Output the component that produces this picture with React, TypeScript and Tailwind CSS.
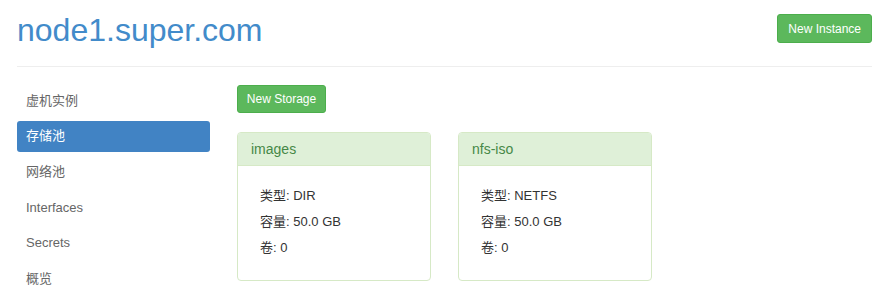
import React from "react";

const navItems = ["虚机实例", "存储池", "网络池", "Interfaces", "Secrets", "概览"];

const pools = [
  { name: "images", type: "DIR", size: "50.0 GB", volumes: 0 },
  { name: "nfs-iso", type: "NETFS", size: "50.0 GB", volumes: 0 },
];

const font = "font-['Liberation_Sans','Noto_Sans_CJK_SC',sans-serif]";

const App = () => {
  return (
    <div className={`${font} bg-white min-h-[308px] pl-[17px] pr-[24px] text-[#333]`}>
      <div className="flex justify-between items-start border-b border-[#eeeeee] h-[67px]">
        <h1 className="pt-[13px] text-[32px] leading-[35px] text-[#428bca]">node1.super.com</h1>
        <button className="mt-[14px] h-[29px] px-[10px] text-[12px] text-white bg-[#5cb85c] border border-[#4cae4c] rounded-[3px]">
          New Instance
        </button>
      </div>

      <div className="flex gap-[27px] pt-[18px]">
        <ul className="w-[193px] flex flex-col gap-[4.6px]">
          {navItems.map((item) => (
            <li
              key={item}
              className={
                item === "存储池"
                  ? "h-[31px] px-[9px] flex items-center text-[13px] text-white bg-[#4183c4] rounded-[3px]"
                  : "h-[31px] px-[9px] flex items-center text-[13px] text-[#666]"
              }
            >
              {item}
            </li>
          ))}
        </ul>

        <div>
          <button className="h-[28px] w-[89px] text-[12px] text-white bg-[#5cb85c] border border-[#4cae4c] rounded-[3px]">
            New Storage
          </button>
          <div className="flex gap-[27px] mt-[19px]">
            {pools.map((p) => (
              <div key={p.name} className="w-[194px] h-[149px] border border-[#d6e9c6] rounded-[4px] overflow-hidden">
                <div className="h-[33px] bg-[#dff0d8] border-b border-[#d6e9c6] px-[13px] flex items-center text-[14px] text-[#468847]">
                  {p.name}
                </div>
                <div className="pt-[17px] pl-[22px] text-[13px] leading-[26px] text-[#333]">
                  <div>类型: {p.type}</div>
                  <div>容量: {p.size}</div>
                  <div>卷: {p.volumes}</div>
                </div>
              </div>
            ))}
          </div>
        </div>
      </div>
    </div>
  );
};

export default App;
